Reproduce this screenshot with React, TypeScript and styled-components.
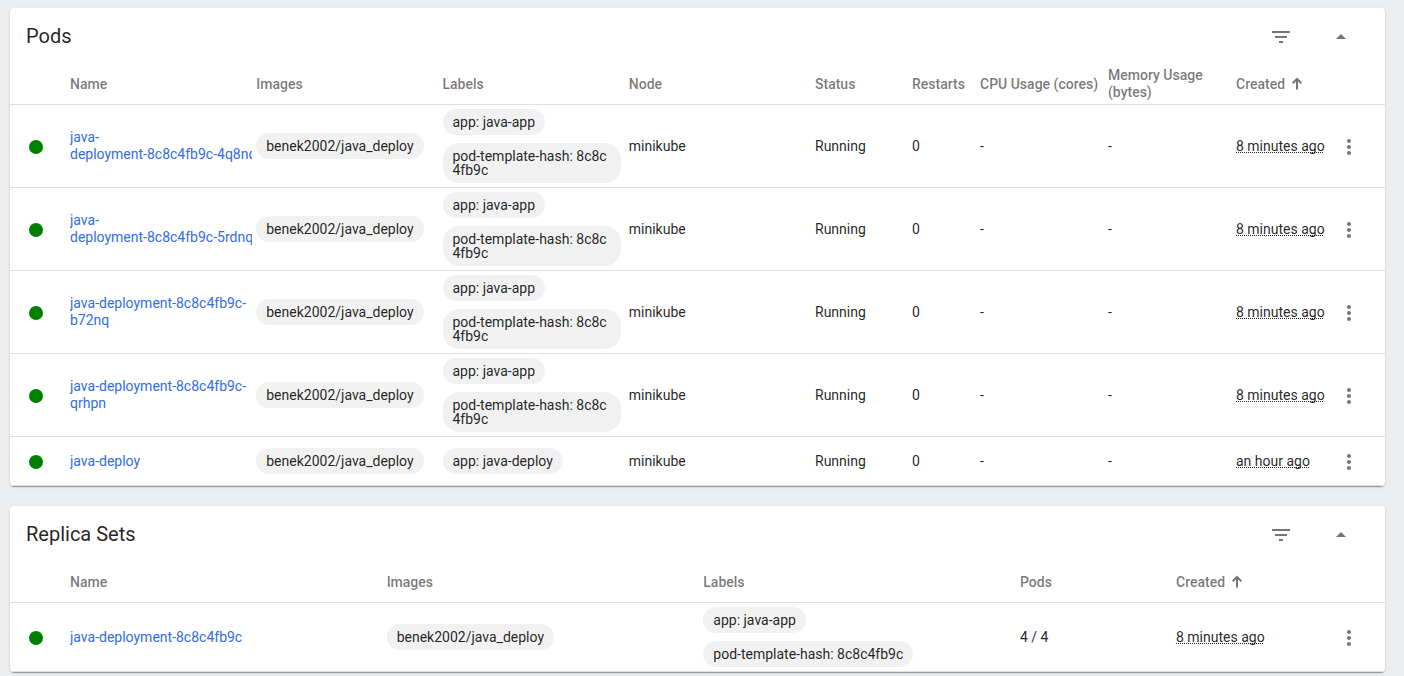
import React, { Fragment } from "react";
import styled, { createGlobalStyle } from "styled-components";

const GlobalStyle = createGlobalStyle`
  *, *::before, *::after { box-sizing: border-box; }
  body {
    margin: 0;
    background: #edeef0;
    color: rgba(0, 0, 0, 0.87);
    font: 400 14px/17px Roboto, "Liberation Sans", sans-serif;
  }
`;

const Page = styled.main`
  display: flex;
  flex-direction: column;
  gap: 20px;
  padding: 8px 19px 4px 10px;
`;

const Card = styled.section`
  background: #fff;
  border-radius: 4px;
  box-shadow: 0 2px 1px -1px rgba(0, 0, 0, 0.2), 0 1px 1px 0 rgba(0, 0, 0, 0.14),
    0 1px 3px 0 rgba(0, 0, 0, 0.12);
`;

const CardHeader = styled.header`
  display: flex;
  align-items: center;
  gap: 20px;
  height: 56px;
  padding: 0 24px 0 16px;
`;

const Title = styled.h2`
  flex: 1;
  margin: 0;
  font-size: 20px;
  font-weight: 400;
  line-height: 24px;
`;

const IconButton = styled.button`
  display: flex;
  align-items: center;
  justify-content: center;
  width: 40px;
  height: 40px;
  padding: 2px 0 0;
  border: 0;
  background: none;
  color: rgba(0, 0, 0, 0.54);
  cursor: pointer;
`;

const Icon = styled.svg`
  display: block;
  width: 24px;
  height: 24px;
  fill: currentColor;
`;

const Table = styled.table`
  width: 100%;
  table-layout: fixed;
  border-collapse: separate;
  border-spacing: 0;
`;

const Column = styled.col<{ $width?: number }>`
  width: ${({ $width }) => ($width ? `${$width}px` : "auto")};
`;

const HeadCell = styled.th`
  height: 41px;
  padding: 0;
  border-bottom: 1px solid #e0e0e0;
  color: rgba(0, 0, 0, 0.54);
  font-weight: 500;
  text-align: left;
  vertical-align: middle;
`;

const SortButton = styled.button`
  display: flex;
  align-items: center;
  gap: 6px;
  padding: 0;
  border: 0;
  background: none;
  color: inherit;
  font: inherit;
  cursor: pointer;
`;

const SortArrow = styled.svg`
  width: 12px;
  height: 14px;
  fill: none;
  stroke: currentColor;
  stroke-width: 2;
`;

const Cell = styled.td`
  height: 49px;
  padding: 0;
  border-bottom: 1px solid #e0e0e0;
  vertical-align: middle;
`;

const StatusCell = styled(Cell)`
  padding: 2px 0 0 14px;
  color: #008000;
`;

const MenuCell = styled(Cell)`
  ${IconButton} {
    margin-left: -4px;
  }
`;

const NameBox = styled.div`
  margin-right: 4px;
  overflow: hidden;
`;

const NameLink = styled.a`
  color: #326de6;
  text-decoration: none;
`;

const NamePart = styled.span`
  white-space: nowrap;
`;

const ChipList = styled.div`
  display: flex;
  flex-direction: column;
  align-items: flex-start;
  gap: 8px;
  padding: 4px 8px 4px 0;
`;

const Chip = styled.span`
  padding: 6px 10px;
  border-radius: 16px;
  background: #f1f1f1;
  line-height: 14px;
  word-break: break-all;
`;

const Age = styled.time`
  text-decoration: underline dotted 1px;
  text-decoration-skip-ink: none;
  text-underline-offset: 1px;
  white-space: nowrap;
`;

interface ColumnDef {
  label: string;
  width?: number;
  sorted?: boolean;
}

interface Resource {
  name: string;
  image: string;
  labels: string[];
  values: string[];
  age: string;
}

const podColumns: ColumnDef[] = [
  { label: "Name" },
  { label: "Images" },
  { label: "Labels" },
  { label: "Node" },
  { label: "Status", width: 97 },
  { label: "Restarts", width: 68 },
  { label: "CPU Usage (cores)", width: 128 },
  { label: "Memory Usage (bytes)", width: 128 },
  { label: "Created", width: 97, sorted: true },
];

const replicaColumns: ColumnDef[] = [
  { label: "Name" },
  { label: "Images" },
  { label: "Labels" },
  { label: "Pods", width: 156 },
  { label: "Created", width: 157, sorted: true },
];

const image = "benek2002/java_deploy";
const podValues = ["minikube", "Running", "0", "-", "-"];
const deploymentLabels = ["app: java-app", "pod-template-hash: 8c8c4fb9c"];

const pods: Resource[] = [
  ...["4q8nq", "5rdnq", "b72nq", "qrhpn"].map((id) => ({
    name: `java-deployment-8c8c4fb9c-${id}`,
    image,
    labels: deploymentLabels,
    values: podValues,
    age: "8 minutes ago",
  })),
  {
    name: "java-deploy",
    image,
    labels: ["app: java-deploy"],
    values: podValues,
    age: "an hour ago",
  },
];

const replicaSets: Resource[] = [
  {
    name: "java-deployment-8c8c4fb9c",
    image,
    labels: deploymentLabels,
    values: ["4 / 4"],
    age: "8 minutes ago",
  },
];

/* A name may wrap after a hyphen only where a letter follows it. */
function ResourceName({ name }: { name: string }) {
  return (
    <NameLink href={`#${name}`}>
      {name.split(/(?<=-)(?=[a-z])/).map((part, i) => (
        <Fragment key={i}>
          {i > 0 && <wbr />}
          <NamePart>{part}</NamePart>
        </Fragment>
      ))}
    </NameLink>
  );
}

function ResourceRow({ item }: { item: Resource }) {
  return (
    <tr>
      <StatusCell>
        <Icon viewBox="0 0 24 24" role="img" aria-label="Healthy">
          <circle cx="12" cy="12" r="7" />
        </Icon>
      </StatusCell>
      <Cell>
        <NameBox>
          <ResourceName name={item.name} />
        </NameBox>
      </Cell>
      <Cell>
        <ChipList>
          <Chip>{item.image}</Chip>
        </ChipList>
      </Cell>
      <Cell>
        <ChipList>
          {item.labels.map((label) => (
            <Chip key={label}>{label}</Chip>
          ))}
        </ChipList>
      </Cell>
      {item.values.map((value, i) => (
        <Cell key={i}>{value}</Cell>
      ))}
      <Cell>
        <Age>{item.age}</Age>
      </Cell>
      <MenuCell>
        <IconButton type="button" aria-label={`Actions for ${item.name}`}>
          <Icon viewBox="0 0 24 24">
            <path d="M12 8c1.1 0 2-.9 2-2s-.9-2-2-2-2 .9-2 2 .9 2 2 2zm0 2c-1.1 0-2 .9-2 2s.9 2 2 2 2-.9 2-2-.9-2-2-2zm0 6c-1.1 0-2 .9-2 2s.9 2 2 2 2-.9 2-2-.9-2-2-2z" />
          </Icon>
        </IconButton>
      </MenuCell>
    </tr>
  );
}

function ResourceCard({
  title,
  columns,
  items,
}: {
  title: string;
  columns: ColumnDef[];
  items: Resource[];
}) {
  return (
    <Card>
      <CardHeader>
        <Title>{title}</Title>
        <IconButton type="button" aria-label={`Filter ${title}`}>
          <Icon viewBox="0 0 24 24">
            <path d="M10 18h4v-2h-4v2zM3 6v2h18V6H3zm3 7h12v-2H6v2z" />
          </Icon>
        </IconButton>
        <IconButton type="button" aria-label={`Collapse ${title}`}>
          <Icon viewBox="0 0 24 24">
            <path d="M7 14l5-5 5 5z" />
          </Icon>
        </IconButton>
      </CardHeader>
      <Table aria-label={title}>
        <colgroup>
          <Column $width={60} />
          {columns.map((column) => (
            <Column key={column.label} $width={column.width} />
          ))}
          <Column $width={52} />
        </colgroup>
        <thead>
          <tr>
            <HeadCell />
            {columns.map((column) => (
              <HeadCell key={column.label} aria-sort={column.sorted ? "ascending" : undefined}>
                {column.sorted ? (
                  <SortButton type="button">
                    {column.label}
                    <SortArrow viewBox="0 0 12 14">
                      <path d="M6 12.5V2.5M1.7 6.3L6 2l4.3 4.3" />
                    </SortArrow>
                  </SortButton>
                ) : (
                  column.label
                )}
              </HeadCell>
            ))}
            <HeadCell />
          </tr>
        </thead>
        <tbody>
          {items.map((item) => (
            <ResourceRow key={item.name} item={item} />
          ))}
        </tbody>
      </Table>
    </Card>
  );
}

export default function App() {
  return (
    <>
      <GlobalStyle />
      <Page>
        <ResourceCard title="Pods" columns={podColumns} items={pods} />
        <ResourceCard title="Replica Sets" columns={replicaColumns} items={replicaSets} />
      </Page>
    </>
  );
}
